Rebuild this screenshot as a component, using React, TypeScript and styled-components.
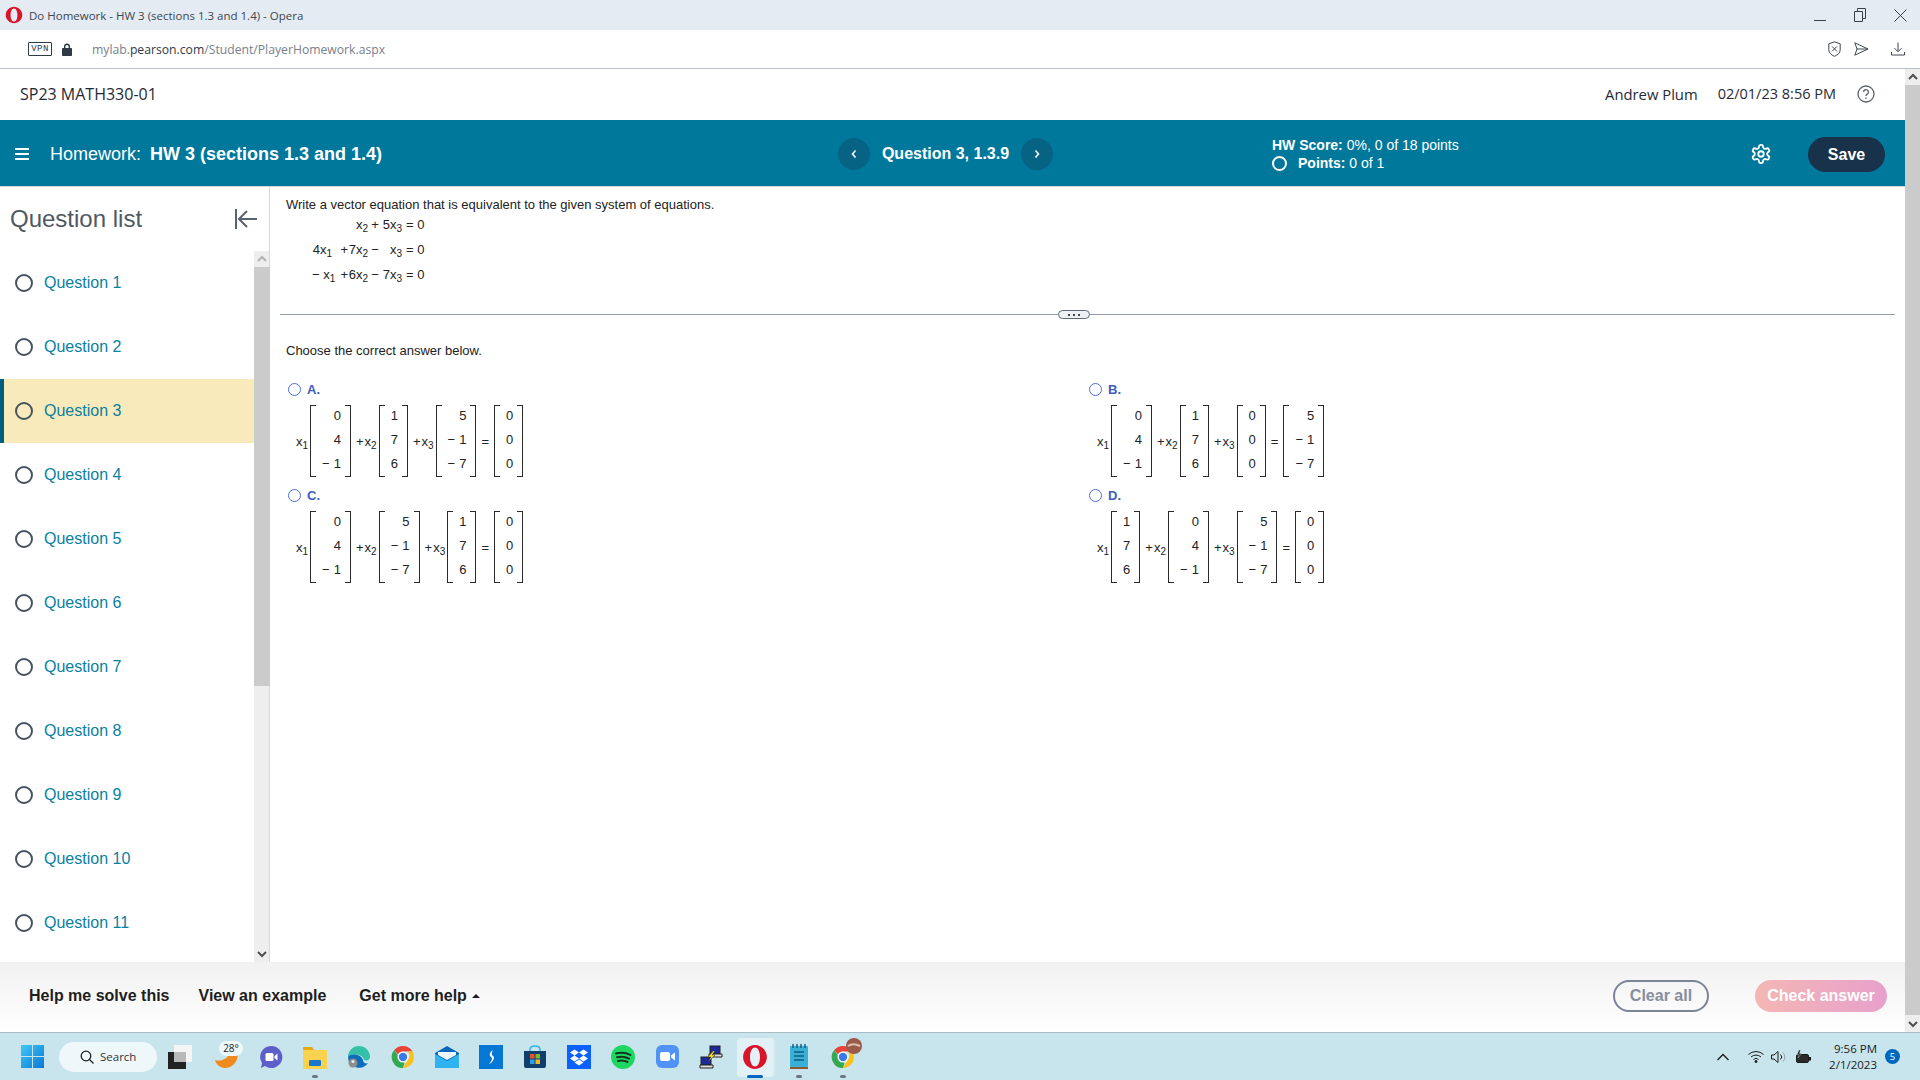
import React from 'react';
import styled, { createGlobalStyle } from 'styled-components';

const GlobalStyle = createGlobalStyle`
  html, body { margin: 0; padding: 0; background: #fff; overflow: hidden; }
  * { box-sizing: border-box; }
`;

const Screen = styled.div`
  width: 1920px;
  height: 1080px;
  display: flex;
  flex-direction: column;
  overflow: hidden;
  font-family: "Liberation Sans", Arial, sans-serif;
  color: #222;
`;

/* browser chrome */
const TitleBar = styled.div`
  height: 30px;
  flex: none;
  display: flex;
  align-items: center;
  padding-left: 5px;
  background: #e4ebf3;
  font-family: "Open Sans", sans-serif;
  font-size: 11.5px;
  color: #3f4650;
`;
const TitleText = styled.span`
  margin-left: 6px;
  flex: 1;
`;
const WindowButtons = styled.div`
  display: flex;
  align-items: center;
  gap: 28px;
  padding-right: 13px;
  color: #3a4048;
`;
const AddressBar = styled.div`
  height: 39px;
  flex: none;
  display: flex;
  align-items: center;
  padding-left: 28px;
  background: #fff;
  border-bottom: 1px solid #b4c0cb;
`;
const VpnTag = styled.span`
  width: 24px;
  height: 14px;
  border: 1px solid #2f3a46;
  border-radius: 1px;
  font-family: "Liberation Mono", monospace;
  font-size: 9px;
  line-height: 12px;
  text-align: center;
  letter-spacing: 0.5px;
  color: #2f3a46;
  margin-right: 10px;
`;
const Url = styled.span`
  margin-left: 20px;
  flex: 1;
  font-family: "Open Sans", sans-serif;
  font-size: 12.2px;
  color: #77808c;
`;
const UrlHost = styled.span`
  color: #2f3a46;
`;
const AddressActions = styled.div`
  display: flex;
  align-items: center;
  gap: 13px;
  padding-right: 15px;
  color: #3f4650;
`;

/* page */
const PageRow = styled.div`
  flex: 1;
  min-height: 0;
  display: flex;
`;
const PageColumn = styled.div`
  flex: 1;
  min-width: 0;
  display: flex;
  flex-direction: column;
`;
const CourseHeader = styled.header`
  height: 51px;
  flex: none;
  display: flex;
  align-items: center;
  padding: 0 30px 2px 20px;
  font-family: "Open Sans", sans-serif;
  font-size: 14.5px;
  color: #1f2a36;
`;
const CourseName = styled.span`
  flex: 1;
  font-size: 16px;
`;
const UserName = styled.span`
  margin-right: 20px;
  font-size: 14.8px;
`;
const DateText = styled.span`
  margin-right: 21px;
`;
const TealBar = styled.div`
  height: 67px;
  flex: none;
  display: grid;
  grid-template-columns: 838px 434px 1fr auto auto;
  align-items: center;
  padding-top: 2px;
  background: #00789c;
  border-bottom: 1px solid #d3d8dd;
  color: #fff;
`;
const HomeworkTitle = styled.div`
  display: flex;
  align-items: center;
  padding-left: 15px;
  font-size: 18px;
`;
const HomeworkName = styled.b`
  margin-left: 9px;
`;
const MenuIcon = styled.span`
  width: 14px;
  height: 12px;
  margin-right: 21px;
  border-top: 2px solid #fff;
  border-bottom: 2px solid #fff;
  position: relative;
  &::after {
    content: '';
    position: absolute;
    left: 0;
    right: 0;
    top: 3px;
    height: 2px;
    background: #fff;
  }
`;
const QuestionNav = styled.div`
  display: flex;
  align-items: center;
  font-size: 16px;
  font-weight: 700;
`;
const NavTitle = styled.span`
  width: 151px;
  text-align: center;
`;
const NavButton = styled.span`
  width: 32px;
  height: 32px;
  border-radius: 50%;
  background: #066384;
  display: flex;
  align-items: center;
  justify-content: center;
`;
const Score = styled.div`
  font-size: 14px;
  line-height: 18px;
`;
const PointsLine = styled.div`
  display: flex;
  align-items: center;
`;
const PointsRing = styled.span`
  width: 15px;
  height: 15px;
  border: 2px solid #fff;
  border-radius: 50%;
  margin-right: 11px;
`;
const GearSlot = styled.span`
  display: flex;
  margin-right: 36px;
`;
const SaveButton = styled.span`
  width: 77px;
  height: 35px;
  margin-right: 20px;
  border-radius: 18px;
  background: #17324a;
  font-size: 16px;
  font-weight: 700;
  line-height: 35px;
  text-align: center;
`;

const Main = styled.div`
  flex: 1;
  min-height: 0;
  display: flex;
`;
const Sidebar = styled.aside`
  width: 270px;
  flex: none;
  display: flex;
  flex-direction: column;
`;
const SidebarHead = styled.div`
  height: 64px;
  flex: none;
  display: flex;
  align-items: center;
  justify-content: space-between;
  padding: 0 11px 0 10px;
  border-right: 1px solid #d5d9de;
  font-size: 24px;
  color: #4f5863;
`;
const SidebarBody = styled.div`
  flex: 1;
  min-height: 0;
  display: flex;
`;
const QuestionList = styled.div`
  flex: 1;
  overflow: hidden;
`;
const QuestionRow = styled.div<{ $active?: boolean }>`
  height: 64px;
  display: flex;
  align-items: center;
  padding-left: 15px;
  font-size: 16px;
  color: #0a7f9f;
  background: ${(p) => (p.$active ? '#f8eabb' : 'transparent')};
  box-shadow: ${(p) => (p.$active ? 'inset 4px 0 0 #005f7a' : 'none')};
`;
const QuestionRing = styled.span`
  width: 18px;
  height: 18px;
  margin-right: 11px;
  border: 2px solid #455260;
  border-radius: 50%;
`;
const ScrollTrack = styled.div<{ $width: number; $edge?: boolean }>`
  width: ${(p) => p.$width}px;
  flex: none;
  display: flex;
  flex-direction: column;
  background: #eeeeee;
  box-shadow: ${(p) => (p.$edge ? 'inset -1px 0 0 #d5d9de' : 'none')};
`;
const ScrollArrow = styled.div<{ $muted?: boolean }>`
  height: 16px;
  flex: none;
  display: flex;
  align-items: center;
  justify-content: center;
  color: ${(p) => (p.$muted ? '#b4b4b4' : '#505050')};
`;
const ScrollThumb = styled.div<{ $height: number }>`
  height: ${(p) => p.$height}px;
  flex: none;
  background: #cbcbcb;
`;
const ScrollGap = styled.div`
  flex: 1;
`;

const Content = styled.main`
  flex: 1;
  min-width: 0;
  padding: 11px 10px 0 10px;
  font-size: 13px;
  color: #222;
`;
const Prompt = styled.div`
  padding-left: 6px;
  line-height: 14px;
`;
const EquationGrid = styled.div`
  display: grid;
  grid-template-columns: 20px 16px 20px 14px 20px 30px;
  grid-auto-rows: 25px;
  align-items: center;
  margin: 0 0 0 32px;
  width: max-content;
  white-space: pre;
  height: 75px;
`;
const EqRight = styled.span`
  text-align: right;
`;
const EqCenter = styled.span`
  text-align: center;
`;
const EqEnd = styled.span`
  padding-left: 4px;
`;
const Divider = styled.div`
  height: 1px;
  margin-top: 27px;
  background: #939cb0;
  position: relative;
`;
const DividerPill = styled.span`
  position: absolute;
  left: 778px;
  top: -4px;
  width: 32px;
  height: 9px;
  border: 1.5px solid #5d6a7e;
  border-radius: 5px;
  background: #eef0f3;
  display: flex;
  align-items: center;
  justify-content: center;
  gap: 3px;
`;
const PillDot = styled.i`
  width: 2px;
  height: 2px;
  background: #3d4858;
`;
const Instruction = styled.div`
  margin-top: 29px;
  padding-left: 6px;
  line-height: 14px;
`;
const Answers = styled.div`
  display: grid;
  grid-template-columns: 801px 1fr;
  margin-top: 24px;
  padding-left: 8px;
`;
const Answer = styled.div`
  height: 106px;
`;
const AnswerLabel = styled.div`
  display: flex;
  align-items: center;
  height: 15px;
  color: #3f5cc0;
  font-weight: 700;
`;
const AnswerRing = styled.span`
  width: 13px;
  height: 13px;
  margin-right: 6px;
  border: 1.5px solid #4a6fd8;
  border-radius: 50%;
`;
const Expression = styled.div`
  display: flex;
  align-items: center;
  height: 72px;
  margin: 8px 0 0 8px;
`;
const Variable = styled.span<{ $plus?: boolean }>`
  margin: 0 2px 0 ${(p) => (p.$plus ? 5 : 0)}px;
  white-space: nowrap;
`;
const Plus = styled.span`
  margin-right: 1px;
`;
const Equals = styled.span`
  margin: 0 5px;
`;
const Sub = styled.sub`
  font-size: 10px;
  line-height: 0;
  vertical-align: -3px;
`;
const Matrix = styled.div`
  position: relative;
  height: 72px;
  display: flex;
  flex-direction: column;
  justify-content: space-between;
  padding: 2px 10px 4px 12px;
  text-align: right;
  line-height: 18px;
  word-spacing: 0.5px;
  &::before,
  &::after {
    content: '';
    position: absolute;
    top: 0;
    bottom: 0;
    width: 5px;
    border: 1.5px solid #2a2a2a;
  }
  &::before {
    left: 0;
    border-right: none;
  }
  &::after {
    right: 0;
    border-left: none;
  }
`;

const BottomBar = styled.div`
  height: 70px;
  flex: none;
  display: flex;
  align-items: center;
  padding: 0 18px 2px 29px;
  background: linear-gradient(#f1f1f1, #ffffff);
  font-size: 16px;
  font-weight: 700;
  color: #1e1e1e;
`;
const HelpLink = styled.span<{ $gap: number }>`
  margin-right: ${(p) => p.$gap}px;
`;
const HelpCaret = styled.span`
  display: inline-block;
  margin-left: 5px;
  vertical-align: 3px;
  border: 4px solid transparent;
  border-top: none;
  border-bottom: 4px solid #1e1e1e;
`;
const BarSpacer = styled.div`
  flex: 1;
`;
const ClearButton = styled.span`
  width: 96px;
  height: 32px;
  margin-right: 46px;
  border: 2px solid #7b8396;
  border-radius: 16px;
  color: #868ea0;
  line-height: 28px;
  text-align: center;
`;
const CheckButton = styled.span`
  width: 132px;
  height: 32px;
  border-radius: 16px;
  background: linear-gradient(90deg, #f4b7b4, #e8a0cc);
  color: #fff;
  line-height: 32px;
  text-align: center;
`;

/* windows taskbar */
const Taskbar = styled.footer`
  height: 48px;
  flex: none;
  display: flex;
  align-items: center;
  background: #c8e4ec;
  border-top: 1px solid #a9bcc4;
`;
const StartSlot = styled.div`
  width: 59px;
  flex: none;
  display: flex;
  padding-left: 21px;
`;
const SearchPill = styled.div`
  width: 98px;
  height: 30px;
  display: flex;
  align-items: center;
  padding-left: 21px;
  margin-right: 1px;
  border-radius: 15px;
  background: #eef7fa;
  font-family: "Open Sans", sans-serif;
  font-size: 11.5px;
  color: #333;
  gap: 6px;
`;
const TaskSlot = styled.div<{ $state?: 'open' | 'active' }>`
  width: 44px;
  height: 46px;
  flex: none;
  position: relative;
  display: flex;
  align-items: center;
  justify-content: center;
  &::before {
    content: ${(p) => (p.$state === 'active' ? "''" : 'none')};
    position: absolute;
    left: 4px;
    right: 4px;
    top: 4px;
    bottom: 3px;
    border-radius: 4px;
    background: #e2f1f5;
    box-shadow: 2px 0 0 #d8ebf0;
  }
  &::after {
    content: ${(p) => (p.$state ? "''" : 'none')};
    position: absolute;
    bottom: 2px;
    left: 50%;
    width: ${(p) => (p.$state === 'active' ? 16 : 6)}px;
    height: 3px;
    margin-left: ${(p) => (p.$state === 'active' ? -8 : -3)}px;
    border-radius: 2px;
    background: ${(p) => (p.$state === 'active' ? '#0067c0' : '#6b7880')};
  }
  & > * {
    position: relative;
  }
`;
const SlotOffset = styled.div`
  width: 3px;
  flex: none;
`;
const WeatherBadge = styled.span`
  position: absolute;
  top: -3px;
  right: -3px;
  width: 24px;
  height: 15px;
  border-radius: 8px;
  background: #eef7fa;
  font-family: "Open Sans", sans-serif;
  font-size: 10px;
  line-height: 15px;
  text-align: center;
  color: #222;
`;
const WeatherWrap = styled.div`
  width: 26px;
  height: 26px;
`;
const Tray = styled.div`
  margin-left: auto;
  display: flex;
  align-items: center;
  color: #1b1b1b;
`;
const TrayIcon = styled.span<{ $gap: number }>`
  display: flex;
  margin-right: ${(p) => p.$gap}px;
`;
const Clock = styled.div`
  width: 66px;
  font-family: "Open Sans", sans-serif;
  font-size: 11.5px;
  line-height: 16px;
  text-align: right;
  color: #222;
`;
const NotifyBadge = styled.span`
  width: 15px;
  height: 15px;
  margin: 0 20px 0 8px;
  border-radius: 50%;
  background: #0067c0;
  color: #fff;
  font-family: "Open Sans", sans-serif;
  font-size: 9.5px;
  line-height: 15px;
  text-align: center;
`;

const Chevron = ({ dir }: { dir: 'up' | 'down' }) => (
  <svg width="10" height="8" viewBox="0 0 10 8" fill="none" stroke="currentColor" strokeWidth="2">
    <path d={dir === 'up' ? 'M1 6l4-4 4 4' : 'M1 2l4 4 4-4'} />
  </svg>
);

const Scrollbar = ({ width, thumb, inSidebar }: { width: number; thumb: number; inSidebar?: boolean }) => (
  <ScrollTrack $width={width} $edge={inSidebar}>
    <ScrollArrow $muted={inSidebar}>
      <Chevron dir="up" />
    </ScrollArrow>
    <ScrollThumb $height={thumb} />
    <ScrollGap />
    <ScrollArrow>
      <Chevron dir="down" />
    </ScrollArrow>
  </ScrollTrack>
);

const Term = ({ n, plus }: { n: number; plus?: boolean }) => (
  <Variable $plus={plus}>
    {plus && <Plus>+</Plus>}x<Sub>{n}</Sub>
  </Variable>
);

const Column = ({ values }: { values: string[] }) => (
  <Matrix>
    {values.map((v, i) => (
      <span key={i}>{v}</span>
    ))}
  </Matrix>
);

const A = ['0', '4', '− 1'];
const B = ['1', '7', '6'];
const C = ['5', '− 1', '− 7'];
const Z = ['0', '0', '0'];

const answers: { label: string; columns: string[][] }[] = [
  { label: 'A.', columns: [A, B, C, Z] },
  { label: 'B.', columns: [A, B, Z, C] },
  { label: 'C.', columns: [A, C, B, Z] },
  { label: 'D.', columns: [B, A, C, Z] },
];

const questions = Array.from({ length: 11 }, (_, i) => i + 1);

const Eq = ({ c, n }: { c?: string; n: number }) => (
  <EqRight>
    {c}x<Sub>{n}</Sub>
  </EqRight>
);

const OperaMark = ({ size }: { size: number }) => (
  <svg width={size} height={size} viewBox="0 0 24 24">
    <path
      fillRule="evenodd"
      d="M12 1c6 0 11 5 11 11s-5 11-11 11S1 18 1 12 6 1 12 1zm0 2.200c-2.800 0-4.600 3.900-4.600 8.800s1.800 8.800 4.600 8.800 4.600-3.900 4.600-8.800-1.800-8.800-4.600-8.800z"
      fill="#d9132a"
    />
  </svg>
);

const ChromeMark = () => (
  <svg width="24" height="24" viewBox="0 0 24 24">
    <path d="M12 1a11 11 0 0 1 9.500 5.500H12a5.500 5.500 0 0 0-5 3.200L3.400 4.800A11 11 0 0 1 12 1z" fill="#ea4335" />
    <path d="M21.500 6.500A11 11 0 0 1 12 23l4.700-8.200a5.500 5.500 0 0 0 0-8.300z" fill="#fbc116" />
    <path d="M12 23A11 11 0 0 1 3.400 4.800L8 12.800a5.500 5.500 0 0 0 5.600 4.500z" fill="#34a853" />
    <circle cx="12" cy="12" r="5.500" fill="#fff" />
    <circle cx="12" cy="12" r="4.200" fill="#3b78e7" />
  </svg>
);

export default function App() {
  return (
    <Screen>
      <GlobalStyle />
      <TitleBar>
        <OperaMark size={18} />
        <TitleText>Do Homework - HW 3 (sections 1.3 and 1.4) - Opera</TitleText>
        <WindowButtons>
          <svg width="12" height="12" viewBox="0 0 12 12" stroke="currentColor" fill="none">
            <path d="M0 11.500h12" />
          </svg>
          <svg width="12" height="14" viewBox="0 0 12 14" stroke="currentColor" fill="none">
            <path d="M.5 3.500h8v10h-8zM3.500 3.500v-3h8v10h-3" />
          </svg>
          <svg width="13" height="13" viewBox="0 0 13 13" stroke="currentColor" fill="none">
            <path d="M.5.500l12 12M12.500.500l-12 12" />
          </svg>
        </WindowButtons>
      </TitleBar>
      <AddressBar>
        <VpnTag>VPN</VpnTag>
        <svg width="10" height="13" viewBox="0 0 10 13" fill="#2f3a46">
          <path d="M2 5V3.500a3 3 0 0 1 6 0V5h1.200a.8.8 0 0 1 .8.8v6.400a.8.8 0 0 1-.8.8H.8a.8.8 0 0 1-.8-.8V5.800a.8.8 0 0 1 .8-.8zm1.400 0h3.200V3.500a1.600 1.600 0 0 0-3.200 0z" />
        </svg>
        <Url>
          mylab.<UrlHost>pearson.com</UrlHost>/Student/PlayerHomework.aspx
        </Url>
        <AddressActions>
          <svg width="13" height="16" viewBox="0 0 13 16" fill="none" stroke="currentColor">
            <path d="M6.500.8l5.700 2v6c0 3-2.500 5.200-5.700 6.500C3.300 14 .8 11.800.8 8.800v-6zM4 5.400l5 5M9 5.400l-5 5" />
          </svg>
          <svg width="15" height="14" viewBox="0 0 15 14" fill="none" stroke="currentColor">
            <path d="M.8.800L14 7 .8 13.200 3 7zM3 7h11" />
          </svg>
          <svg width="14" height="14" viewBox="0 0 14 14" fill="none" stroke="currentColor" style={{ marginLeft: 9 }}>
            <path d="M7 .5v9M3.500 6.200L7 9.700l3.500-3.500M.5 10v3h13v-3" />
          </svg>
        </AddressActions>
      </AddressBar>

      <PageRow>
        <PageColumn>
          <CourseHeader>
            <CourseName>SP23 MATH330-01</CourseName>
            <UserName>Andrew Plum</UserName>
            <DateText>02/01/23 8:56 PM</DateText>
            <svg width="18" height="18" viewBox="0 0 18 18" fill="none" stroke="#5a626c" strokeWidth="1.300">
              <circle cx="9" cy="9" r="8" />
              <path d="M6.600 7a2.400 2.400 0 1 1 3.600 2.100c-.8.500-1.200 1-1.200 1.900M9 12.600v1.300" />
            </svg>
          </CourseHeader>
          <TealBar>
            <HomeworkTitle>
              <MenuIcon />
              Homework:
              <HomeworkName>HW 3 (sections 1.3 and 1.4)</HomeworkName>
            </HomeworkTitle>
            <QuestionNav>
              <NavButton>
                <svg width="6" height="10" viewBox="0 0 6 10" fill="none" stroke="#fff" strokeWidth="1.600">
                  <path d="M4.500 1.500L1.500 5l3 3.500" />
                </svg>
              </NavButton>
              <NavTitle>Question 3, 1.3.9</NavTitle>
              <NavButton>
                <svg width="6" height="10" viewBox="0 0 6 10" fill="none" stroke="#fff" strokeWidth="1.600">
                  <path d="M1.500 1.500L4.500 5l-3 3.500" />
                </svg>
              </NavButton>
            </QuestionNav>
            <Score>
              <div>
                <b>HW Score:</b> 0%, 0 of 18 points
              </div>
              <PointsLine>
                <PointsRing />
                <span>
                  <b>Points:</b> 0 of 1
                </span>
              </PointsLine>
            </Score>
            <GearSlot>
              <svg width="22" height="22" viewBox="0 0 24 24" fill="none" stroke="#fff" strokeWidth="2" strokeLinejoin="round">
                <path d="M12.200 2h-.4a2 2 0 0 0-2 2v.2a2 2 0 0 1-1 1.700l-.4.3a2 2 0 0 1-2 0l-.2-.1a2 2 0 0 0-2.700.7l-.2.4a2 2 0 0 0 .7 2.700l.2.1a2 2 0 0 1 1 1.700v.5a2 2 0 0 1-1 1.700l-.2.1a2 2 0 0 0-.7 2.700l.2.4a2 2 0 0 0 2.700.7l.2-.1a2 2 0 0 1 2 0l.4.3a2 2 0 0 1 1 1.700v.2a2 2 0 0 0 2 2h.4a2 2 0 0 0 2-2v-.2a2 2 0 0 1 1-1.700l.4-.3a2 2 0 0 1 2 0l.2.1a2 2 0 0 0 2.700-.7l.2-.4a2 2 0 0 0-.7-2.700l-.2-.1a2 2 0 0 1-1-1.700v-.5a2 2 0 0 1 1-1.700l.2-.1a2 2 0 0 0 .7-2.700l-.2-.4a2 2 0 0 0-2.700-.7l-.2.1a2 2 0 0 1-2 0l-.4-.3a2 2 0 0 1-1-1.700V4a2 2 0 0 0-2-2z" />
                <circle cx="12" cy="12" r="3" />
              </svg>
            </GearSlot>
            <SaveButton>Save</SaveButton>
          </TealBar>
          <Main>
            <Sidebar>
              <SidebarHead>
                Question list
                <svg width="23" height="20" viewBox="0 0 23 20" fill="none" stroke="#5a626c" strokeWidth="2">
                  <path d="M1 0v20M22 10H5M12 2l-8 8 8 8" />
                </svg>
              </SidebarHead>
              <SidebarBody>
                <QuestionList>
                  {questions.map((q) => (
                    <QuestionRow key={q} $active={q === 3}>
                      <QuestionRing />
                      Question {q}
                    </QuestionRow>
                  ))}
                </QuestionList>
                <Scrollbar width={16} thumb={419} inSidebar />
              </SidebarBody>
            </Sidebar>
            <Content>
              <Prompt>Write a vector equation that is equivalent to the given system of equations.</Prompt>
              <EquationGrid>
                <span />
                <span />
                <Eq n={2} />
                <EqCenter>+</EqCenter>
                <Eq c="5" n={3} />
                <EqEnd>= 0</EqEnd>
                <Eq c="4" n={1} />
                <EqRight>+</EqRight>
                <Eq c="7" n={2} />
                <EqCenter>−</EqCenter>
                <Eq n={3} />
                <EqEnd>= 0</EqEnd>
                <Eq c="− " n={1} />
                <EqRight>+</EqRight>
                <Eq c="6" n={2} />
                <EqCenter>−</EqCenter>
                <Eq c="7" n={3} />
                <EqEnd>= 0</EqEnd>
              </EquationGrid>
              <Divider>
                <DividerPill>
                  <PillDot />
                  <PillDot />
                  <PillDot />
                </DividerPill>
              </Divider>
              <Instruction>Choose the correct answer below.</Instruction>
              <Answers>
                {answers.map((a) => (
                  <Answer key={a.label}>
                    <AnswerLabel>
                      <AnswerRing />
                      {a.label}
                    </AnswerLabel>
                    <Expression>
                      <Term n={1} />
                      <Column values={a.columns[0]} />
                      <Term n={2} plus />
                      <Column values={a.columns[1]} />
                      <Term n={3} plus />
                      <Column values={a.columns[2]} />
                      <Equals>=</Equals>
                      <Column values={a.columns[3]} />
                    </Expression>
                  </Answer>
                ))}
              </Answers>
            </Content>
          </Main>
          <BottomBar>
            <HelpLink $gap={29}>Help me solve this</HelpLink>
            <HelpLink $gap={33}>View an example</HelpLink>
            <HelpLink $gap={0}>
              Get more help
              <HelpCaret />
            </HelpLink>
            <BarSpacer />
            <ClearButton>Clear all</ClearButton>
            <CheckButton>Check answer</CheckButton>
          </BottomBar>
        </PageColumn>
        <Scrollbar width={15} thumb={930} />
      </PageRow>

      <Taskbar>
        <StartSlot>
          <svg width="23" height="23" viewBox="0 0 23 23">
            <defs>
              <linearGradient id="win" x1="0" y1="0" x2="1" y2="1">
                <stop offset="0" stopColor="#3fc8f8" />
                <stop offset="1" stopColor="#0a78d6" />
              </linearGradient>
            </defs>
            <path d="M0 0h11v11H0zM12 0h11v11H12zM0 12h11v11H0zM12 12h11v11H12z" fill="url(#win)" />
          </svg>
        </StartSlot>
        <SearchPill>
          <svg width="14" height="14" viewBox="0 0 14 14" fill="none" stroke="#222" strokeWidth="1.300">
            <circle cx="6" cy="6" r="4.800" />
            <path d="M9.500 9.500L13.500 13.500" />
          </svg>
          Search
        </SearchPill>
        <TaskSlot>
          <svg width="24" height="24" viewBox="0 0 24 24">
            <rect x="0" y="7" width="18" height="17" fill="#222" />
            <rect x="6" y="0" width="18" height="17" fill="#f5f5f5" />
            <rect x="6" y="7" width="12" height="10" fill="#b9b9b9" />
          </svg>
        </TaskSlot>
        <SlotOffset />
        <TaskSlot>
          <WeatherWrap>
            <svg width="26" height="26" viewBox="0 0 26 26">
              <path d="M1 16c6 2 13-1 15-8 4-1 7 0 8 1 0 9-6 15-13 15C6 24 2 20 1 16z" fill="#f08a1c" />
            </svg>
            <WeatherBadge>28°</WeatherBadge>
          </WeatherWrap>
        </TaskSlot>
        <TaskSlot>
          <svg width="24" height="24" viewBox="0 0 24 24">
            <path d="M12 1a11 11 0 1 1-6 20l-4 2 1-5A11 11 0 0 1 12 1z" fill="#5c5fc8" />
            <rect x="6.500" y="8" width="8" height="8" rx="1.500" fill="#fff" />
            <path d="M15.500 11l3-2.500v7l-3-2.500z" fill="#fff" />
          </svg>
        </TaskSlot>
        <TaskSlot $state="open">
          <svg width="24" height="24" viewBox="0 0 24 24">
            <path d="M0 2h9l2 3h13v19H0z" fill="#e8a90f" />
            <rect y="5" width="24" height="19" fill="#fbd24e" />
            <rect x="6" y="15" width="12" height="6" rx="1" fill="#1777c9" />
          </svg>
        </TaskSlot>
        <TaskSlot>
          <svg width="24" height="24" viewBox="0 0 24 24">
            <path d="M1 12a11 11 0 0 1 22 0c0 3-3 4-6 3-1-6-12-7-16-3z" fill="#35c1a8" />
            <path d="M1 12c3-4 13-3 15 3 0 3 3 4 5 3a11 11 0 0 1-20-6z" fill="#0c6dba" />
            <circle cx="6" cy="18" r="4.500" fill="#8d8d8d" />
            <circle cx="6" cy="16.500" r="1.600" fill="#eee" />
          </svg>
        </TaskSlot>
        <TaskSlot>
          <ChromeMark />
        </TaskSlot>
        <TaskSlot>
          <svg width="24" height="22" viewBox="0 0 24 22">
            <path d="M0 7L12 0l12 7v15H0z" fill="#0a66b8" />
            <path d="M0 8l12 7 12-7v14H0z" fill="#2eb3f0" />
            <path d="M3 6h18v3l-9 5-9-5z" fill="#eaf6fc" />
          </svg>
        </TaskSlot>
        <TaskSlot>
          <svg width="24" height="24" viewBox="0 0 24 24">
            <rect width="24" height="24" fill="#0478d4" />
            <path d="M14 5c-3 2-4 4-3 6l2 2c0 2-1 4-3 6 3-1 5-4 5-7l-2-2c-.5-1.500 0-3 1-5z" fill="#fff" />
          </svg>
        </TaskSlot>
        <TaskSlot>
          <svg width="24" height="24" viewBox="0 0 24 24">
            <path d="M7 6V4.500C7 2 9 1 12 1s5 1 5 3.500V6" fill="none" stroke="#33b5e5" strokeWidth="1.500" />
            <path d="M1 6h22v15a2 2 0 0 1-2 2H3a2 2 0 0 1-2-2z" fill="#103f6e" />
            <rect x="7" y="9" width="4.500" height="4.500" fill="#e8512a" />
            <rect x="12.500" y="9" width="4.500" height="4.500" fill="#7dbb2a" />
            <rect x="7" y="14.500" width="4.500" height="4.500" fill="#2aa4e8" />
            <rect x="12.500" y="14.500" width="4.500" height="4.500" fill="#f5b81c" />
          </svg>
        </TaskSlot>
        <TaskSlot>
          <svg width="24" height="24" viewBox="0 0 24 24">
            <rect width="24" height="24" fill="#0b61ff" />
            <path d="M7.500 4.500L12 7.500 7.500 10.500 3 7.500zM16.500 4.500L21 7.500l-4.500 3-4.500-3zM7.500 10.500L12 13.500l-4.500 3-4.500-3zM16.500 10.500L21 13.500l-4.500 3-4.500-3zM12 14.500l4.500 3L12 20.500l-4.500-3z" fill="#fff" />
          </svg>
        </TaskSlot>
        <TaskSlot>
          <svg width="24" height="24" viewBox="0 0 24 24" fill="none">
            <circle cx="12" cy="12" r="12" fill="#1ed760" />
            <path d="M5 8.500c5-1.500 10-1 14.500 1.500M6 12.300c4-1.100 8.500-.7 12 1.300M7 16c3.200-.8 6.500-.5 9.500 1" stroke="#12331f" strokeWidth="2" strokeLinecap="round" />
          </svg>
        </TaskSlot>
        <TaskSlot>
          <svg width="23" height="23" viewBox="0 0 23 23">
            <rect width="23" height="23" rx="6" fill="#4f93f7" />
            <rect x="4" y="7" width="10" height="9" rx="2" fill="#fff" />
            <path d="M15 10.500l4-3v8l-4-3z" fill="#fff" />
          </svg>
        </TaskSlot>
        <TaskSlot>
          <svg width="24" height="24" viewBox="0 0 24 24">
            <rect x="11" y="1" width="10" height="8" fill="#1d2a9c" stroke="#222" />
            <path d="M10 9h13v3H10z" fill="#ddd" stroke="#222" />
            <rect x="2" y="12" width="10" height="8" fill="#1d2a9c" stroke="#222" />
            <path d="M1 20h13v3H1z" fill="#ddd" stroke="#222" />
            <path d="M14 6l-5 6h3l-3 5 7-7h-3l3-4z" fill="#f6e11c" stroke="#333" strokeWidth=".5" />
          </svg>
        </TaskSlot>
        <TaskSlot $state="active">
          <OperaMark size={26} />
        </TaskSlot>
        <TaskSlot $state="open">
          <svg width="24" height="26" viewBox="0 0 24 26">
            <rect x="3" y="2" width="18" height="21" rx="1" fill="#3ab0d6" />
            <path d="M3 23h18v2H3z" fill="#8a5a2b" />
            <path d="M7 8h10M7 12h10M7 16h10" stroke="#0d5f80" strokeWidth="1.500" />
            <path d="M6 0v4M10 0v4M14 0v4M18 0v4" stroke="#17607f" strokeWidth="1.500" />
          </svg>
        </TaskSlot>
        <TaskSlot $state="open">
          <ChromeMark />
          <svg width="16" height="16" viewBox="0 0 16 16" style={{ position: 'absolute', top: 4, right: 3 }}>
            <circle cx="8" cy="8" r="8" fill="#9c5a4a" />
            <path d="M2 8c3-2 8-2 12 0" stroke="#d9c4b0" strokeWidth="2" fill="none" />
          </svg>
        </TaskSlot>
        <Tray>
          <TrayIcon $gap={19}>
            <svg width="12" height="8" viewBox="0 0 12 8" fill="none" stroke="#1b1b1b" strokeWidth="1.300">
              <path d="M.5 7L6 1.500 11.500 7" />
            </svg>
          </TrayIcon>
          <TrayIcon $gap={7}>
            <svg width="16" height="13" viewBox="0 0 16 13" fill="none" stroke="#1b1b1b">
              <path d="M.5 4.500a11 11 0 0 1 15 0M3 7a7.500 7.500 0 0 1 10 0M5.500 9.500a3.500 3.500 0 0 1 5 0" />
              <circle cx="8" cy="11.500" r="1" fill="#1b1b1b" />
            </svg>
          </TrayIcon>
          <TrayIcon $gap={8}>
            <svg width="16" height="14" viewBox="0 0 16 14" fill="none" stroke="#1b1b1b">
              <path d="M.5 5h2.500l4-3.500v11L3 9H.5z" />
              <path d="M9.500 4.500a3.500 3.500 0 0 1 0 5" />
              <path d="M12 2.500a6.500 6.500 0 0 1 0 9" stroke="#9aa5aa" />
            </svg>
          </TrayIcon>
          <TrayIcon $gap={0}>
            <svg width="16" height="13" viewBox="0 0 16 13">
              <rect x="1.500" y="4.500" width="12" height="8" rx="1.500" fill="#2a2a2a" stroke="#1b1b1b" />
              <rect x="14" y="7" width="2" height="3.500" fill="#1b1b1b" />
              <path d="M4 0L2 4.500h2L3 8l3.500-4.500H4.500L5.500 0z" fill="#1b1b1b" stroke="#c8e4ec" strokeWidth=".4" />
            </svg>
          </TrayIcon>
          <Clock>
            9:56 PM
            <br />
            2/1/2023
          </Clock>
          <NotifyBadge>5</NotifyBadge>
        </Tray>
      </Taskbar>
    </Screen>
  );
}
